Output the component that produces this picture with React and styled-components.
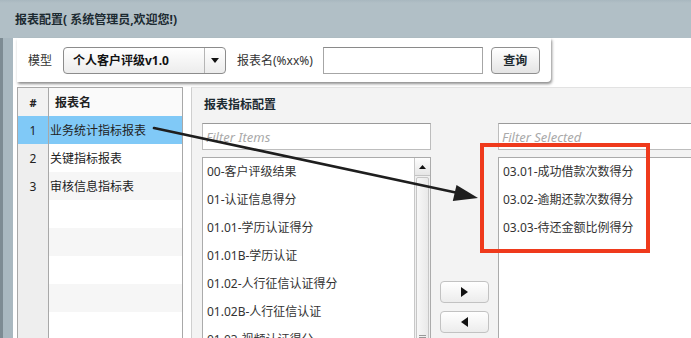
import React from 'react'
import styled, { createGlobalStyle } from 'styled-components'

const GlobalStyle = createGlobalStyle`
  html, body { margin: 0; padding: 0; background: #a9b8c0; }
  body {
    font-family: "Noto Sans", "Noto Sans CJK SC", sans-serif;
    font-size: 12px;
    color: #222;
  }
  * { box-sizing: border-box; }
`

const leftItems = [
  '00-客户评级结果',
  '01-认证信息得分',
  '01.01-学历认证得分',
  '01.01B-学历认证',
  '01.02-人行征信认证得分',
  '01.02B-人行征信认证',
  '01.03-视频认证得分',
]

const selectedItems = ['03.01-成功借款次数得分', '03.02-逾期还款次数得分', '03.03-待还金额比例得分']

const reports = ['业务统计指标报表', '关键指标报表', '审核信息指标表', '', '', '', '', '']

function App() {
  return (
    <>
      <GlobalStyle />
      <Page>
        <TitleBar>报表配置( 系统管理员,欢迎您!)</TitleBar>
        <Content>
          <Toolbar>
            <Label>模型</Label>
            <Select>
              <SelectText>个人客户评级v1.0</SelectText>
              <SelectArrow>
                <svg width="8" height="5" viewBox="0 0 8 5"><polygon points="0,0 8,0 4,5" fill="#111" /></svg>
              </SelectArrow>
            </Select>
            <Label $ml={11}>报表名(%xx%)</Label>
            <TextInput />
            <QueryButton>查询</QueryButton>
          </Toolbar>

          <Body>
            <Grid>
              <GridRow $header>
                <NumCell $header>#</NumCell>
                <NameCell $header>报表名</NameCell>
              </GridRow>
              {reports.map((r, i) => (
                <GridRow key={i} $selected={i === 0} $alt={i % 2 === 0}>
                  <NumCell $selected={i === 0}>{r ? i + 1 : ''}</NumCell>
                  <NameCell>{r}</NameCell>
                </GridRow>
              ))}
            </Grid>
            <Spacer />
            <RightPanel>
              <PanelTitle>报表指标配置</PanelTitle>
              <Columns>
                <ListCol>
                  <Filter placeholder="Filter Items" />
                  <ListBox>
                    <Items>
                      {leftItems.map((t) => (
                        <Item key={t}>{t}</Item>
                      ))}
                    </Items>
                    <Scrollbar>
                      <ScrollUp>
                        <svg width="7" height="4" viewBox="0 0 7 4"><polygon points="0,4 7,4 3.5,0" fill="#111" /></svg>
                      </ScrollUp>
                      <Thumb>
                        <Grip />
                      </Thumb>
                    </Scrollbar>
                  </ListBox>
                </ListCol>
                <ButtonCol>
                  <MoveButton>
                    <svg width="7" height="10" viewBox="0 0 7 10"><polygon points="0,0 7,5 0,10" fill="#111" /></svg>
                  </MoveButton>
                  <MoveButton>
                    <svg width="7" height="10" viewBox="0 0 7 10"><polygon points="7,0 0,5 7,10" fill="#111" /></svg>
                  </MoveButton>
                </ButtonCol>
                <ListCol $wide>
                  <Filter placeholder="Filter Selected" />
                  <ListBox>
                    <Items>
                      {selectedItems.map((t) => (
                        <Item key={t}>{t}</Item>
                      ))}
                    </Items>
                  </ListBox>
                </ListCol>
              </Columns>
            </RightPanel>
          </Body>
        </Content>

        {/* annotation overlays */}
        <RedBox />
        <ArrowSvg width="691" height="338" viewBox="0 0 691 338">
          <line x1="154" y1="128" x2="458" y2="193" stroke="#1e1e1e" strokeWidth="2.6" strokeLinecap="round" />
          <polygon points="478,198 452.8,201 456.5,185" fill="#1e1e1e" />
        </ArrowSvg>
      </Page>
    </>
  )
}

const Page = styled.div`
  position: relative;
  width: 691px;
  height: 338px;
  overflow: hidden;
  display: flex;
  flex-direction: column;
  background: #a9b8c0;
  box-shadow: inset 3px 0 0 #7d8b93;
`
const TitleBar = styled.div`
  flex: none;
  height: 38px;
  display: flex;
  align-items: center;
  padding-left: 15px;
  font-size: 12px;
  font-weight: bold;
  color: #1c2a31;
  background: linear-gradient(#a8b7bf 0, #b1bfc6 3px, #b1bfc6 100%);
`
const Content = styled.div`
  flex: 1;
  min-height: 0;
  margin-left: 13px;
  padding-left: 4px;
  background: #fff;
  display: flex;
  flex-direction: column;
`
const Toolbar = styled.div`
  flex: none;
  width: 534px;
  height: 44px;
  display: flex;
  align-items: center;
  padding-left: 11px;
  background: #fff;
  border-bottom-right-radius: 4px;
  box-shadow: 1px 2px 3px rgba(0, 0, 0, 0.45);
  position: relative;
  z-index: 1;
`
const Label = styled.span`
  margin-left: ${(p) => p.$ml || 0}px;
  font-size: 12px;
  color: #333;
  white-space: nowrap;
`
const Select = styled.div`
  margin-left: 11px;
  width: 163px;
  height: 27px;
  display: flex;
  align-items: center;
  border: 1px solid #8c8c8c;
  border-radius: 4px;
  background: linear-gradient(#ffffff, #ececec);
`
const SelectText = styled.span`
  flex: 1;
  padding-left: 9px;
  font-weight: bold;
  font-size: 12px;
  color: #111;
`
const SelectArrow = styled.span`
  width: 21px;
  height: 100%;
  display: flex;
  align-items: center;
  justify-content: center;
  border-left: 1px solid #b5b5b5;
`
const TextInput = styled.input`
  margin-left: 10px;
  width: 160px;
  height: 27px;
  border: 1px solid #a6a6a6;
  border-top-color: #8a8a8a;
  outline: none;
  background: #fff;
`
const QueryButton = styled.button`
  margin-left: 8px;
  width: 49px;
  height: 27px;
  padding: 0;
  border: 1px solid #8f8f8f;
  border-radius: 4px;
  background: linear-gradient(#ffffff, #e4e4e4);
  font-family: inherit;
  font-size: 12px;
  font-weight: bold;
  color: #1e2a30;
`
const Body = styled.div`
  flex: 1;
  min-height: 0;
  display: flex;
  margin-top: 5px;
`
const Grid = styled.div`
  width: 166px;
  flex: none;
  border: 1px solid #a8a8a8;
  border-bottom: none;
  background: #fff;
`
const GridRow = styled.div`
  height: 28px;
  display: flex;
  background: ${(p) => (p.$selected ? '#80c9f7' : p.$header ? '#fafafa' : p.$alt ? '#f6f6f6' : '#fff')};
`
const NumCell = styled.div`
  width: 31px;
  flex: none;
  display: flex;
  align-items: center;
  justify-content: center;
  border-right: 1px solid #a8a8a8;
  background: ${(p) => (p.$selected ? '#80c9f7' : p.$header ? '#f2f2f2' : '#eeeeee')};
  font-weight: ${(p) => (p.$header ? 'bold' : 'normal')};
  font-size: ${(p) => (p.$header ? 11 : 12)}px;
  color: #222;
`
const NameCell = styled.div`
  flex: 1;
  display: flex;
  align-items: center;
  padding-left: ${(p) => (p.$header ? 6 : 1)}px;
  font-weight: ${(p) => (p.$header ? 'bold' : 'normal')};
  font-size: 12px;
  color: #222;
`
const Spacer = styled.div`
  width: 8px;
  flex: none;
  background: #fff;
`
const RightPanel = styled.div`
  flex: 1;
  min-width: 0;
  background: #f3f3f3;
  border-left: 1px solid #cfcfcf;
  border-top: 1px solid #e2e2e2;
  padding-left: 10px;
  display: flex;
  flex-direction: column;
`
const PanelTitle = styled.div`
  height: 35px;
  display: flex;
  align-items: center;
  padding-left: 2px;
  padding-bottom: 3px;
  font-weight: bold;
  font-size: 12px;
  color: #1c2a31;
`
const Columns = styled.div`
  flex: 1;
  min-height: 0;
  display: flex;
  gap: 9px;
`
const ListCol = styled.div`
  width: ${(p) => (p.$wide ? 240 : 229)}px;
  flex: none;
  display: flex;
  flex-direction: column;
`
const Filter = styled.input`
  flex: none;
  height: 27px;
  margin-bottom: 7px;
  padding: 0 0 0 3px;
  border: 1px solid #bdbdbd;
  border-top-color: #9a9a9a;
  background: #fff;
  outline: none;
  font-family: inherit;
  font-size: 13px;
  &::placeholder {
    color: #a9a9a9;
    font-style: italic;
  }
`
const ListBox = styled.div`
  flex: 1;
  display: flex;
  border: 1px solid #ababab;
  border-bottom: none;
  background: #fff;
  overflow: hidden;
`
const Items = styled.div`
  flex: 1;
`
const Item = styled.div`
  height: 28px;
  line-height: 28px;
  padding-left: 4px;
  font-size: 12px;
  color: #333;
  white-space: nowrap;
`
const Scrollbar = styled.div`
  width: 16px;
  flex: none;
  border-left: 1px solid #c8c8c8;
  background: #f0f0f0;
  display: flex;
  flex-direction: column;
`
const ScrollUp = styled.div`
  height: 18px;
  flex: none;
  display: flex;
  align-items: center;
  justify-content: center;
  border-bottom: 1px solid #c4c4c4;
  background: linear-gradient(#fdfdfd, #e6e6e6);
`
const Thumb = styled.div`
  height: 320px;
  flex: none;
  margin: 1px 1px 0;
  border: 1px solid #c6c6c6;
  border-radius: 2px;
  background: linear-gradient(90deg, #f7f7f7, #e9e9e9);
  display: flex;
  align-items: center;
  justify-content: center;
`
const Grip = styled.div`
  width: 7px;
  height: 5px;
  border-top: 1px solid #999;
  border-bottom: 1px solid #999;
  position: relative;
  &::after {
    content: '';
    position: absolute;
    left: 0;
    right: 0;
    top: 1px;
    border-top: 1px solid #999;
  }
`
const ButtonCol = styled.div`
  width: 49px;
  flex: none;
  display: flex;
  flex-direction: column;
  gap: 8px;
  padding-top: 158px;
`
const MoveButton = styled.div`
  height: 22px;
  display: flex;
  align-items: center;
  justify-content: center;
  border: 1px solid #c2c2c2;
  border-radius: 4px;
  background: linear-gradient(#ffffff, #ececec);
`
const RedBox = styled.div`
  position: absolute;
  left: 480px;
  top: 143px;
  width: 170px;
  height: 110px;
  border: 4.5px solid #ef3a1c;
  pointer-events: none;
`
const ArrowSvg = styled.svg`
  position: absolute;
  left: 0;
  top: 0;
  pointer-events: none;
`

export default App
